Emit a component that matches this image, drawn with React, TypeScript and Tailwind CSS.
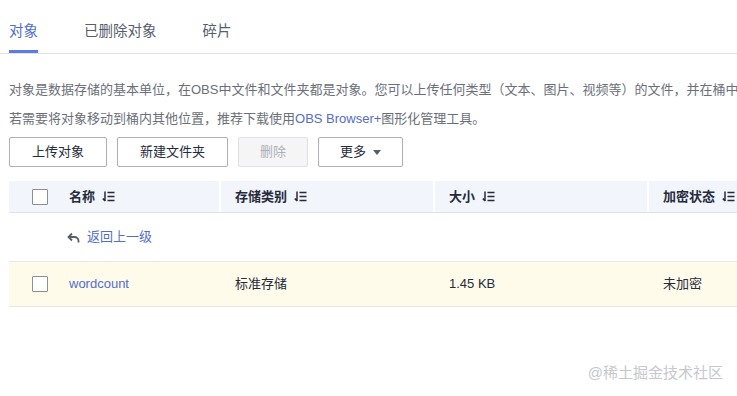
import React from "react";

const FONT = '"Liberation Sans", "Noto Sans CJK SC", sans-serif';

const TABS = ["对象", "已删除对象", "碎片"];

function SortIcon() {
  return (
    <svg width="13" height="11" viewBox="0 0 13 11" className="ml-[7px] shrink-0">
      <path d="M3 0.5v9.5M3.2 10L0.8 7.6" stroke="#252b3a" strokeWidth="1.5" fill="none" />
      <path d="M5.5 1.5h7M5.5 5.5h7M5.5 9.5h7" stroke="#252b3a" strokeWidth="1.5" fill="none" />
    </svg>
  );
}

function Checkbox() {
  return <div className="h-4 w-4 rounded-[1px] border border-[#8a8e99] bg-white" />;
}

function Cell({ w, children, first }: { w: string; children?: React.ReactNode; first?: boolean }) {
  return (
    <div className={`${w} flex shrink-0 items-center pl-[14px] ${first ? "" : "border-l-2 border-white"}`}>
      {children}
    </div>
  );
}

export default function App() {
  return (
    <div
      className="relative h-[396px] w-[737px] overflow-hidden bg-white text-[13px] text-[#252b3a]"
      style={{ fontFamily: FONT }}
    >
      {/* tabs */}
      <div className="flex gap-[46px] border-b border-[#dfe1e6] pl-[9px]">
        {TABS.map((t, i) => (
          <div
            key={t}
            className={`h-[53px] border-b-[3px] pt-[21px] text-[14.5px] leading-[20px] ${
              i === 0 ? "border-[#5e7ce0] text-[#526ecc]" : "border-transparent text-[#575d6c]"
            }`}
          >
            {t}
          </div>
        ))}
      </div>

      <div className="pl-[9px]">
        <div className="mt-[21px] whitespace-nowrap leading-[29px] text-[#6b6f78]">
          <p>对象是数据存储的基本单位，在OBS中文件和文件夹都是对象。您可以上传任何类型（文本、图片、视频等）的文件，并在桶中</p>
          <p>
            若需要将对象移动到桶内其他位置，推荐下载使用<span className="text-[#526ecc]">OBS Browser+</span>图形化管理工具。
          </p>
        </div>

        {/* toolbar */}
        <div className="mt-[4px] flex gap-[10px]">
          <button className="h-[30px] rounded-[2px] border border-[#adb0b8] bg-white px-[22px] text-[#252b3a]">
            上传对象
          </button>
          <button className="h-[30px] rounded-[2px] border border-[#adb0b8] bg-white px-[22px] text-[#252b3a]">
            新建文件夹
          </button>
          <button className="h-[30px] rounded-[2px] border border-[#dfe1e6] bg-[#f5f5f6] px-[21px] text-[#adb0b8]">
            删除
          </button>
          <button className="flex h-[30px] items-center gap-[7px] rounded-[2px] border border-[#adb0b8] bg-white px-[21px] text-[#252b3a]">
            更多
            <svg width="8" height="5" viewBox="0 0 8 5">
              <path d="M0 0h8L4 5z" fill="#575d6c" />
            </svg>
          </button>
        </div>

        {/* table */}
        <div className="mt-[14px] w-[852px]">
          <div className="flex h-[32px] border-b border-[#dfe1e6] bg-[#f2f5fc] font-bold">
            <div className="flex w-[46px] shrink-0 items-center pl-[23px]">
              <Checkbox />
            </div>
            <Cell w="w-[164px]" first>
              名称
              <SortIcon />
            </Cell>
            <Cell w="w-[214px]">
              存储类别
              <SortIcon />
            </Cell>
            <Cell w="w-[214px]">
              大小
              <SortIcon />
            </Cell>
            <Cell w="w-[214px]">
              加密状态
              <SortIcon />
            </Cell>
          </div>

          <div className="flex h-[49px] items-center border-b border-[#e5e7eb] pl-[58px]">
            <svg width="13" height="11" viewBox="0 0 13 11" className="mr-[7px]">
              <path d="M5 1.5L1.5 5 5 8.5" stroke="#575d6c" strokeWidth="1.8" fill="none" />
              <path d="M1.5 5h6a4 4 0 0 1 4 4v1.5" stroke="#575d6c" strokeWidth="1.8" fill="none" />
            </svg>
            <span className="text-[#526ecc]">返回上一级</span>
          </div>

          <div className="flex h-[45px] border-b border-[#e5e7eb] bg-[#fffbeb]">
            <div className="flex w-[46px] shrink-0 items-center pl-[23px]">
              <Checkbox />
            </div>
            <div className="flex w-[164px] shrink-0 items-center pl-[14px] text-[#526ecc]">wordcount</div>
            <div className="flex w-[214px] shrink-0 items-center pl-[16px]">标准存储</div>
            <div className="flex w-[214px] shrink-0 items-center pl-[16px]">1.45 KB</div>
            <div className="flex w-[214px] shrink-0 items-center pl-[16px]">未加密</div>
          </div>
        </div>
      </div>

      <div className="absolute right-[14px] top-[362px] text-[15px] text-[#c6c8cc]">@稀土掘金技术社区</div>
    </div>
  );
}
